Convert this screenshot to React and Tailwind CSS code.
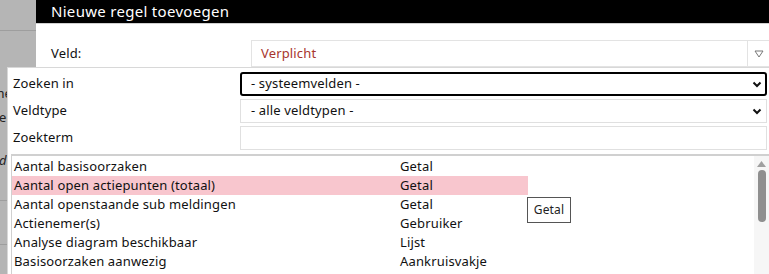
import React from "react";

const rows = [
  ["Aantal basisoorzaken", "Getal"],
  ["Aantal open actiepunten (totaal)", "Getal"],
  ["Aantal openstaande sub meldingen", "Getal"],
  ["Actienemer(s)", "Gebruiker"],
  ["Analyse diagram beschikbaar", "Lijst"],
  ["Basisoorzaken aanwezig", "Aankruisvakje"],
];

function Chevron() {
  return (
    <svg width="10" height="7" viewBox="0 0 10 7" className="shrink-0">
      <path d="M1.5 1.5 L5 5 L8.5 1.5" fill="none" stroke="#111" strokeWidth="2" />
    </svg>
  );
}

export default function App() {
  return (
    <div
      className="relative w-[769px] h-[274px] overflow-hidden flex bg-white text-[#111] tracking-[0.15px]"
      style={{ fontFamily: '"Noto Sans", "Open Sans", sans-serif' }}
    >
      {/* left background strip */}
      <div className="w-[36px] shrink-0 bg-[#b5b5b5] flex flex-col overflow-hidden text-[13px] text-[#222]">
        <div className="h-[31px] border-b border-[#9e9e9e]" />
        <div className="h-[45px]" />
        <div className="h-[10px]" />
        <div className="h-[14px] leading-[14px] ml-[-10px] whitespace-nowrap">che</div>
        <div className="h-[10px]" />
        <div className="h-[14px] leading-[14px] ml-[-1px]">e</div>
        <div className="h-[29px]" />
        <div className="h-[14px] leading-[14px] ml-[-1px] italic">d</div>
        <div className="h-[34px] border-b border-[#9e9e9e]" />
        <div className="h-[44px] border-b border-[#9e9e9e]" />
      </div>

      {/* modal */}
      <div className="flex-1 flex flex-col bg-white">
        <div className="h-[23px] bg-black text-white text-[15px] tracking-[0.3px] leading-[23px] pl-[15px] border-b border-[#d0d0d0] box-content">
          Nieuwe regel toevoegen
        </div>
        <div className="flex items-center mt-[16px] h-[27px]">
          <div className="w-[215px] pl-[15px] text-[13px]">Veld:</div>
          <div className="flex-1 h-[27px] border border-[#e3e3e3] border-r-0 flex items-center">
            <span className="flex-1 pl-[9px] text-[13px] text-[#a8362e]">Verplicht</span>
            <div className="w-[22px] h-full border-l border-[#e3e3e3] flex items-center justify-center">
              <svg width="10" height="8" viewBox="0 0 10 8">
                <path d="M1 1 L9 1 L5 7 Z" fill="none" stroke="#777" strokeWidth="1" />
              </svg>
            </div>
          </div>
        </div>
      </div>

      {/* popup overlay */}
      <div className="absolute left-[7px] top-[67px] right-0 bottom-0 bg-white border-t border-l border-[#d8d8d8] flex flex-col text-[13px]">
        <div className="flex flex-col gap-[3px] pt-[4px] pr-[2px]">
          <div className="flex items-center h-[24px]">
            <div className="w-[232px] pl-[5px]">Zoeken in</div>
            <div className="flex-1 h-[24px] border-2 border-black rounded-[3px] flex items-center pl-[9px] pr-[3px]">
              <span className="flex-1">- systeemvelden -</span>
              <Chevron />
            </div>
          </div>
          <div className="flex items-center h-[24px]">
            <div className="w-[232px] pl-[5px]">Veldtype</div>
            <div className="flex-1 h-[24px] border border-[#e0e0e0] flex items-center pl-[10px] pr-[4px]">
              <span className="flex-1">- alle veldtypen -</span>
              <Chevron />
            </div>
          </div>
          <div className="flex items-center h-[24px]">
            <div className="w-[232px] pl-[5px]">Zoekterm</div>
            <div className="flex-1 h-[24px] border border-[#e0e0e0]" />
          </div>
        </div>

        <div className="mt-[4px] ml-[3px] flex-1 flex border-t-2 border-l border-[#d0d0d0] relative">
          <div className="flex-1 flex flex-col pt-[1px]">
            {rows.map(([a, b], i) => (
              <div
                key={a}
                className={`flex items-center h-[19px] w-[516px] ${i === 1 ? "bg-[#f8c6ce]" : ""}`}
              >
                <div className="w-[388px] pl-[2px] whitespace-nowrap">{a}</div>
                <div className="whitespace-nowrap">{b}</div>
              </div>
            ))}
          </div>
          <div className="w-[15px] bg-[#f6f6f6] flex flex-col items-center pt-[5px]">
            <svg width="9" height="6" viewBox="0 0 9 6">
              <path d="M4.5 0 L9 6 L0 6 Z" fill="#a0a0a0" />
            </svg>
            <div className="mt-[3px] w-[8px] h-[52px] rounded-full bg-[#8f8f8f]" />
          </div>

          {/* tooltip */}
          <div className="absolute left-[515px] top-[41px] w-[44px] h-[26px] bg-white border border-[#555] text-[12px] flex items-center justify-center text-[#222]">
            Getal
          </div>
        </div>
      </div>
    </div>
  );
}
